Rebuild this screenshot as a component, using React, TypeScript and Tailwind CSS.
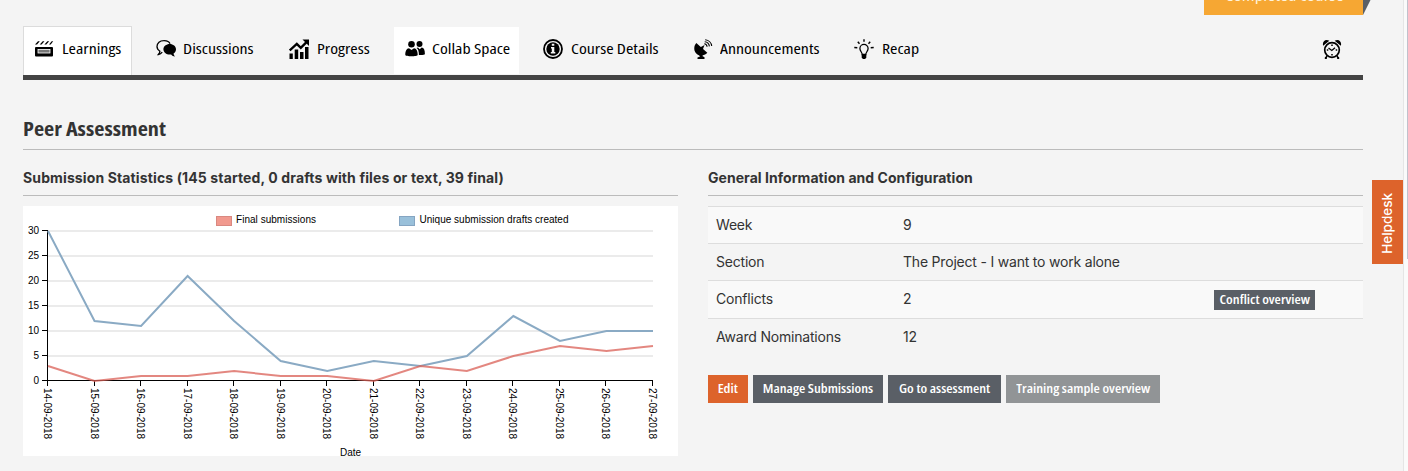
import React from "react";

const navFont = "font-['Open_Sans','Noto_Sans',sans-serif] [font-stretch:75%]";

const Svg = ({ children, vb = "0 0 20 20", cls = "w-5 h-5" }: { children: React.ReactNode; vb?: string; cls?: string }) => (
  <svg viewBox={vb} className={`${cls} shrink-0 fill-black`}>{children}</svg>
);

const Clapper = () => (
  <Svg>
    <rect x="1" y="8" width="18" height="9.500" rx="1" />
    <path d="M1 5.500 4 2.200h1.800L3 5.500zM5.700 5.500 8.700 2.200h1.800L7.600 5.500zM10.400 5.500l3-3.300h1.800L12.300 5.500zM15 5.500l2.700-3.300h1.500L16.700 5.500z" />
    <rect x="4" y="10.500" width="12" height="3.500" fill="#777" stroke="#fff" strokeWidth=".8" />
  </Svg>
);
const Chat = () => (
  <Svg>
    <path d="M7.700 1.600C4 1.600 1 4 1 7.600c0 2 1.100 3.500 2.900 4.600-.1 1.200-.7 2.400-1.500 3.300 1.600-.1 3-1.100 3.800-2.300M7.500 1.600c3.200-.1 5.800 1 6.500 3.200" fill="none" stroke="#000" strokeWidth="1.300" />
    <path d="M13.700 5c3.500 0 6.300 2.300 6.300 5.300 0 1.800-.9 3.300-2.400 4.200 0 1 .6 2.100 1.400 3-1.700-.1-3-.8-3.900-2-.5.100-.9.100-1.400.1-3.500 0-6.300-2.300-6.300-5.300S10.200 5 13.700 5z" />
  </Svg>
);
const Growth = () => (
  <Svg>
    <path d="M.5 14.500h3.300V20H.5zM5.700 10.500h3.500V20H5.700zM11 13h3.500v7H11zM16 8h3.500v12H16z" />
    <path d="M.7 11.500 7.800 4.800l4 4 5.500-5.500" fill="none" stroke="#000" strokeWidth="2.400" />
    <path d="M13.500.5H20V7z" />
  </Svg>
);
const People = () => (
  <Svg>
    <circle cx="6.500" cy="5.300" r="3.300" />
    <circle cx="14.500" cy="5" r="3" />
    <path d="M.3 16c0-4 1.200-6.500 3.700-6.700l2.500 1.700L9 9.300c2.500.2 3.700 2.700 3.700 6.700 0 1.700-12.400 1.700-12.400 0z" />
    <path d="M11.500 9c1.700.8 2.500 3.700 2.400 7 3 .2 6-.1 6-1 0-4-1-6.300-3.200-6.500l-2 1.800L13 8.500z" />
  </Svg>
);
const Info = () => (
  <Svg>
    <circle cx="10" cy="10" r="9" fill="none" stroke="#000" strokeWidth="1.800" />
    <circle cx="10" cy="10" r="6.700" />
    <path d="M8.800 4.800h2.500v2H8.800zM8 8h3.300v5h1v1.500H7.800V13h1V9.500H8z" fill="#f4f4f4" />
  </Svg>
);
const Dish = () => (
  <Svg>
    <path d="M3.300 4C.2 7.500.8 12.500 3.800 15c3 2.500 7.700 2 10.500-1.200z" />
    <path d="m7 8.500 4.500-2.500-1.900 5z" />
    <path d="M5.500 15h5l-1.200 2 2.200 1.200V20h-7v-1.500L7 17.500z" />
    <g fill="none" stroke="#000" strokeWidth="1.100">
      <path d="M11.300 4.800c1.500.2 2.600 1.400 2.800 3M11.700 2.800c2.600.2 4.400 2.100 4.700 4.600M12.200.8c3.600.3 6.200 3 6.500 6.200" />
    </g>
  </Svg>
);
const Bulb = () => (
  <Svg>
    <path d="M8.200 15.500c0-2.300-2.300-3.300-2.300-6a4.100 4.100 0 0 1 8.200 0c0 2.700-2.300 3.700-2.300 6z" fill="none" stroke="#000" strokeWidth="1.300" />
    <path d="M7.700 15.300h4.600v3.500l-1.300 1.200H9l-1.300-1.200z" />
    <path d="M10 .3v2.500M3.800 2.700l1.700 2M16.200 2.700l-1.700 2M.3 8.500l3 .3M19.700 8.500l-3 .3" fill="none" stroke="#000" strokeWidth="1.400" />
  </Svg>
);
const Alarm = () => (
  <Svg>
    <circle cx="10" cy="11" r="7.300" fill="none" stroke="#000" strokeWidth="1.700" />
    <path d="M1.200 6.800C-.2 2.500 3.500-.7 7.300 1.700zM18.800 6.800c1.400-4.300-2.300-7.500-6.100-5.100z" />
    <path d="m6.500 9 3.300 2.500L13 8.700" fill="none" stroke="#000" strokeWidth="1.300" />
    <path d="M10 5.500v1.500M10 15v1.500M4.800 11h1.500M13.700 11h1.500M5 17l-1.500 2.500M15 17l1.500 2.500" stroke="#000" strokeWidth="1.500" />
    <circle cx="3.800" cy="19" r="1.100" /><circle cx="16.200" cy="19" r="1.100" />
  </Svg>
);

const tabs = [
  { label: "Learnings", icon: <Clapper />, cls: "w-[109px] h-[49px] pb-1 pl-[10px] bg-white border border-b-0 border-[#dcdcdc]", text: "ml-[8px]" },
  { label: "Discussions", icon: <Chat />, cls: "w-[135px] h-[49px] pb-[3px] pl-[24px]", text: "ml-[7px]" },
  { label: "Progress", icon: <Growth />, cls: "w-[127px] h-[49px] pb-[3px] pl-[22px]", text: "ml-[8px]" },
  { label: "Collab Space", icon: <People />, cls: "w-[125px] h-[47px] mb-px pb-[3px] pl-[11px] bg-white", text: "ml-[7px]" },
  { label: "Course Details", icon: <Info />, cls: "w-[150px] h-[49px] pb-[3px] pl-[24px]", text: "ml-2" },
  { label: "Announcements", icon: <Dish />, cls: "w-[162px] h-[49px] pb-[3px] pl-[24px]", text: "ml-[7px]" },
  { label: "Recap", icon: <Bulb />, cls: "w-[120px] h-[49px] pb-[3px] pl-[23px]", text: "ml-[8px]" },
];

const dates = [14, 15, 16, 17, 18, 19, 20, 21, 22, 23, 24, 25, 26, 27];
const finals = [3, 0, 1, 1, 2, 1, 1, 0, 3, 2, 5, 7, 6, 7];
const drafts = [30, 12, 11, 21, 12, 4, 2, 4, 3, 5, 13, 8, 10, 10];
const px = (i: number) => 25 + (i * 605) / 13;
const py = (v: number) => 175 - v * 5;
const line = (values: number[]) => values.map((v, i) => `${px(i)},${py(v)}`).join(" ");

const Chart = () => (
  <svg width="655" height="250" className="block bg-white font-['Liberation_Sans',Arial,sans-serif] text-[10px]">
    {[5, 10, 15, 20, 25, 30].map((v) => (
      <rect key={v} x="25" y={py(v) - 1} width="605" height="2" fill="#ebebeb" />
    ))}
    <g shapeRendering="crispEdges" fill="#000">
      <rect x="24" y="24" width="1" height="151" />
      <rect x="24" y="174" width="606" height="1" />
      {[0, 5, 10, 15, 20, 25, 30].map((v) => (
        <rect key={v} x="19" y={py(v) - 1} width="6" height="1" />
      ))}
      {dates.map((d, i) => (
        <rect key={d} x={Math.round(px(i)) - 1} y="175" width="1" height="5" />
      ))}
    </g>
    {[0, 5, 10, 15, 20, 25, 30].map((v) => (
      <text key={v} x="16" y={py(v) + 3} textAnchor="end">{v}</text>
    ))}
    {dates.map((d, i) => (
      <text key={d} transform={`translate(${px(i) - 4} 182) rotate(90)`} textLength="51">{d}-09-2018</text>
    ))}
    <polyline points={line(drafts)} fill="none" stroke="#8aaac4" strokeWidth="2" />
    <polyline points={line(finals)} fill="none" stroke="#d95f55" strokeOpacity=".75" strokeWidth="2" />
    <rect x="193.500" y="10.500" width="15" height="9" fill="#f1998e" stroke="#d98880" />
    <text x="213" y="17" textLength="80">Final submissions</text>
    <rect x="376.500" y="10.500" width="15" height="9" fill="#99c0da" stroke="#85a5c2" />
    <text x="396.500" y="17" textLength="149">Unique submission drafts created</text>
    <text x="317" y="250" textLength="21">Date</text>
  </svg>
);

const rows = [
  { name: "Week", value: "9", cls: "h-[37px] bg-[#f9f9f9]" },
  { name: "Section", value: "The Project - I want to work alone", cls: "h-[37px]" },
  { name: "Conflicts", value: "2", cls: "h-[38px] bg-[#f9f9f9]", action: "Conflict overview" },
  { name: "Award Nominations", value: "12", cls: "h-[38px]" },
];

const buttons = [
  { label: "Edit", cls: "w-10 bg-[#dd632b]" },
  { label: "Manage Submissions", cls: "w-[130px] bg-[#5a5f66]" },
  { label: "Go to assessment", cls: "w-[113px] bg-[#5a5f66]" },
  { label: "Training sample overview", cls: "w-[154px] bg-[#919496]" },
];

export default function App() {
  return (
    <div className="relative flex h-[471px] w-[1408px] overflow-hidden bg-[#f4f4f4] font-['Inter',sans-serif] text-[#333]">
      <main className="ml-[23px] w-[1340px]">
        <header className="flex h-[26px] justify-end">
          <div className={`h-[15px] w-[159px] overflow-hidden bg-[#f6a733] pl-[21px] text-[15px] leading-[15px] text-[#fff3dc] ${navFont}`}>
            <span className="-mt-[12px] block w-fit origin-left scale-x-[1.27] whitespace-nowrap">Completed course</span>
          </div>
        </header>
        <nav className={`flex h-[54px] items-end border-b-[5px] border-[#444] text-[15px] text-black ${navFont}`}>
          {tabs.map((t) => (
            <a key={t.label} className={`flex shrink-0 items-center whitespace-nowrap ${t.cls}`}>
              {t.icon}
              <span className={`origin-left scale-x-[1.19] pb-0.5 ${t.text}`}>{t.label}</span>
            </a>
          ))}
          <a className="mr-[21px] ml-auto flex h-[49px] items-center pb-[4px]"><Alarm /></a>
        </nav>
        <h1 className={`mt-[29px] h-[41px] border-b border-[#bbb] pt-[7px] text-[19px] leading-[26px] font-bold ${navFont}`}>
          <span className="inline-block origin-left scale-x-[1.17]">Peer Assessment</span>
        </h1>
        <div className="flex gap-[30px]">
          <section className="w-[655px]">
            <h2 className="mb-[10px] h-[46px] border-b border-[#bbb] pt-[18px] text-[14px] leading-5 font-bold tracking-[0.125px]">
              Submission Statistics (145 started, 0 drafts with files or text, 39 final)
            </h2>
            <Chart />
          </section>
          <section className="w-[655px]">
            <h2 className="mb-[10px] h-[46px] border-b border-[#bbb] pt-[18px] text-[14px] leading-5 font-bold tracking-[0.05px]">
              General Information and Configuration
            </h2>
            <div className="text-[14px] tracking-[-0.2px]">
              {rows.map((r) => (
                <div key={r.name} className={`flex items-center border-t border-[#ddd] pl-2 ${r.cls}`}>
                  <span className="w-[187px] pb-0.5">{r.name}</span>
                  <span className="pb-0.5">{r.value}</span>
                  {r.action && (
                    <button className={`mr-12 ml-auto h-5 w-[101px] bg-[#5a5f66] text-[12px] font-semibold tracking-normal whitespace-nowrap text-white ${navFont}`}>
                      <span className="inline-block scale-x-[1.2]">{r.action}</span>
                    </button>
                  )}
                </div>
              ))}
            </div>
            <div className={`mt-[19px] flex gap-[5px] text-[12.500px] font-semibold text-white ${navFont}`}>
              {buttons.map((b) => (
                <button key={b.label} className={`h-7 whitespace-nowrap ${b.cls}`}>
                  <span className="inline-block scale-x-[1.15]">{b.label}</span>
                </button>
              ))}
            </div>
          </section>
        </div>
      </main>
      <svg className="absolute top-0 left-[1363px] h-[15px] w-2"><path d="M0 0H7.500L0 15z" fill="#5a5f66" /></svg>
      <button className="absolute top-[180px] left-[1372px] flex h-[84px] w-[31px] items-center justify-center bg-[#dd632b] pt-[2px] text-[13.500px] font-medium text-white">
        <span className="rotate-180 [writing-mode:vertical-rl]">Helpdesk</span>
      </button>
      <div className="ml-auto h-full w-[5px] border-l border-[#e5e5e5] bg-[#fafafa]">
        <div className="ml-auto h-[259px] w-px bg-[#c1c1cc]" />
      </div>
    </div>
  );
}
